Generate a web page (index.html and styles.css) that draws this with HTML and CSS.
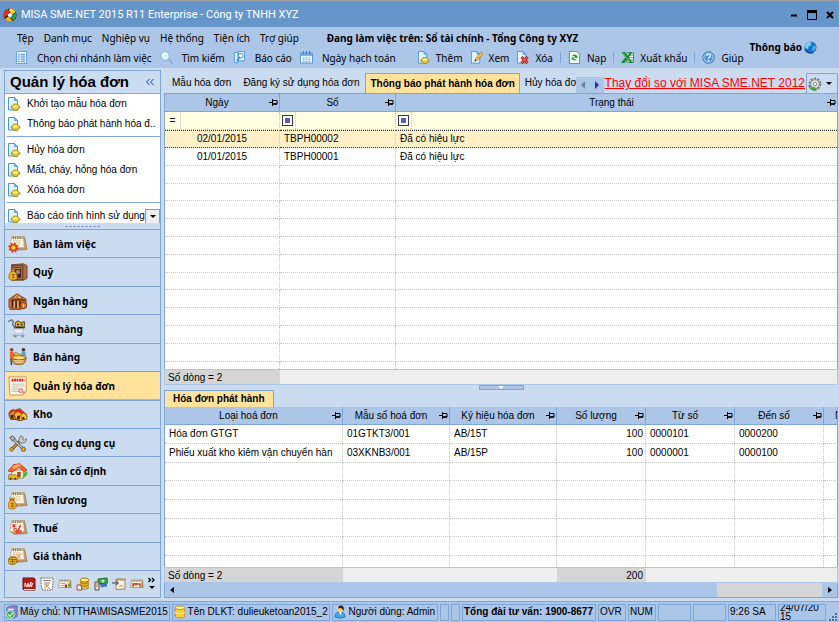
FILE: index.html
```html
<!DOCTYPE html>
<html lang="vi">
<head>
    <meta charset="UTF-8">
    <meta name="viewport" content="width=device-width, initial-scale=1.0">
    <title>MISA SME.NET 2015 R11 Enterprise - Công ty TNHH XYZ</title>
    <link rel="stylesheet" href="styles.css">
</head>
<body>
    <!-- Bộ biểu tượng dùng chung -->
    <svg class="defs" aria-hidden="true">
        <symbol id="i-pin" viewBox="0 0 9 7"><path d="M0 3.5h3M3.5 0v7" stroke="#000" fill="none"/><path d="M4 1.5h4v3.5h-4" stroke="#000" fill="none"/><path d="M4 5h4" stroke="#000" stroke-width="1.4"/></symbol>
        <symbol id="i-page" viewBox="0 0 14 14"><path d="M1.5.5h6l3 3v9.5h-9z" fill="#e4f3ff" stroke="#4795d6"/><path d="M7.5.5v3h3z" fill="#77b9ec" stroke="#4795d6" stroke-width=".7"/></symbol>
        <symbol id="i-add" viewBox="0 0 14 14"><use href="#i-page"/><path d="M4 9.500l2-1 .5-1.500h4l.5 1.500 2 1v1.500l-2 1-.5 1.500h-4l-.5-1.500-2-1z" fill="#d8c532" stroke="#95861a" stroke-width=".7"/><ellipse cx="8.500" cy="9.500" rx="2.600" ry="1.300" fill="#fff27c"/></symbol>
        <symbol id="i-edit" viewBox="0 0 14 14"><use href="#i-page"/><path d="M5 11l1-3 6-7 2 2-6 7z" fill="#f4bd45" stroke="#a66a1c" stroke-width=".7"/><path d="M5 11l.7-2 1.300 1.200z" fill="#333"/></symbol>
        <symbol id="i-del" viewBox="0 0 14 14"><use href="#i-page"/><path d="M6 6.500l6.500 6.500m0-6.500l-6.500 6.500" stroke="#a81d18" stroke-width="3.200"/><path d="M6.200 6.700l6 6m0-6l-6 6" stroke="#ef5a4a" stroke-width="1.500"/></symbol>
        <symbol id="i-form" viewBox="0 0 14 14"><path d="M1.500.5h11v13h-11z" fill="#f3faff" stroke="#4f9edc"/><path d="M3 3.500h2m1 0h5M3 5.500h2m1 0h5M3 7.500h2m1 0h5M3 9.500h2m1 0h5M3 11.500h2m1 0h5" stroke="#3987cb"/></symbol>
        <symbol id="i-find" viewBox="0 0 14 14"><path d="M9 9l4 4" stroke="#8eb6d9" stroke-width="2.400" stroke-linecap="round"/><circle cx="5.500" cy="5.500" r="4.700" fill="#d9f2ff" stroke="#84bce3" stroke-width="1.300"/><path d="M2.500 5a3 3 0 0 1 3-2.700" stroke="#fff" fill="none" stroke-width="1.400"/></symbol>
        <symbol id="i-report" viewBox="0 0 14 14"><path d="M1.500 1.500h4v11h-4zM5.500.5h7v10h-7z" fill="#e4f5ff" stroke="#4d9ad7"/><circle cx="8.500" cy="5" r="2.500" fill="#fff" stroke="#3d87c5"/><path d="M7 7l-3 4" stroke="#3d87c5" stroke-width="1.600"/></symbol>
        <symbol id="i-cal" viewBox="0 0 14 14"><path d="M.5 2.500h13v10.500h-13z" fill="#f5fbff" stroke="#468fcc"/><path d="M1 3h12v2.500h-12z" fill="#72b3e8"/><path d="M3.500 0v3.500M7 0v3.500M10.500 0v3.500" stroke="#347ab9" stroke-width="1.200"/><path d="M3 7.500h2m1 0h2m1 0h2M3 9.500h2m1 0h2m1 0h2M3 11.500h2m1 0h2m1 0h2" stroke="#5da0da"/></symbol>
        <symbol id="i-load" viewBox="0 0 14 14"><path d="M1.500.5h8l3 3v10h-11z" fill="#f2fbf2" stroke="#4b9b62"/><path d="M4 6q2.500-4 5-1l1-1v3.500h-3l1-1q-2-2-4-.5zM10 8q-2.500 4-5 1l-1 1v-3h3l-1 1q2 2 4 0z" fill="#16953a"/></symbol>
        <symbol id="i-xls" viewBox="0 0 14 14"><path d="M6 2h7.500v10h-7.500z" fill="#effaf0" stroke="#338a43"/><path d="M7 4.500h6M7 7h6M7 9.500h6" stroke="#55a563"/><path d="M.5 1h3.500l3 4 2.500-4h3l-4.200 6 4.700 6h-3.500l-3-3.800-3 3.800h-3.500l4.700-6z" fill="#1d8635"/><path d="M2 2l7.500 10" stroke="#84d28d" stroke-width=".8"/></symbol>
        <symbol id="i-help" viewBox="0 0 14 14"><circle cx="7" cy="7" r="6.200" fill="#4e98e0" stroke="#2a6bb8"/><circle cx="7" cy="7" r="5" fill="none" stroke="#c7e3fb"/><path d="M5 5.500q0-2 2-2t2 1.700q0 1-1 1.500t-1 1.600" stroke="#fff" stroke-width="1.300" fill="none"/><circle cx="7" cy="10.300" r=".9" fill="#fff"/></symbol>
        <symbol id="i-globe" viewBox="0 0 14 14"><circle cx="7" cy="7" r="6.500" fill="#1777cf"/><path d="M2 3q3-3 6-2l-1 2 1 1-3 2-1 3-3-2z" fill="#7bd0f7"/><path d="M9 6l3-1 1 2-2 3-2 0z" fill="#4fb0ea"/><path d="M1 9q3 5 9 3.500" stroke="#0b4a93" stroke-width="1.400" fill="none"/></symbol>
        <symbol id="i-gear" viewBox="0 0 16 16"><circle cx="8" cy="8" r="6.300" fill="none" stroke="#71776f" stroke-width="2" stroke-dasharray="2.400 1.550"/><circle cx="8" cy="8" r="5" fill="#e4e9e5" stroke="#757b74"/><circle cx="8" cy="8" r="2" fill="#fff" stroke="#757b74"/><path d="M1 9q1 4 5 4v-2l4 3-4 2v-1.500q-5 0-5-5.500z" fill="#42b52f" stroke="#26841b" stroke-width=".5"/></symbol>
        <symbol id="i-note" viewBox="0 0 22 20"><path d="M5 2l13 0 3 14-14 1-3-2z" fill="#c39a69" stroke="#8f6a42" stroke-width=".7"/><path d="M4 2h13l1 12h-16z" fill="#fbf3df" stroke="#b89665" stroke-width=".7"/><path d="M5 3.500h11" stroke="#5b4c3e" stroke-width="1.600" stroke-dasharray="1.500 1"/><path d="M5.500 6.500h9M5.300 8.500h9M5 10.500h9" stroke="#c9b99b" stroke-dasharray="2 1"/></symbol>
        <symbol id="n-desk" viewBox="0 0 22 20"><use href="#i-note"/><circle cx="6" cy="14" r="4" fill="none" stroke="#d92c13" stroke-width="3" stroke-dasharray="1.800 1.340"/><circle cx="6" cy="14" r="3" fill="#ffd63a" stroke="#e03a1a" stroke-width="1.500"/></symbol>
        <symbol id="i-bag" viewBox="0 0 22 20"><path d="M4 9l-1-2h5l-1 2q4 4 3 8-1 2-4.500 2t-4.500-2q-1-4 3-8z" fill="#f1b32c" stroke="#915911" stroke-width=".8"/><path d="M3 9h5" stroke="#b33a13"/><path d="M4 13h3.500M4 16h3.500M5.700 12v5" stroke="#8e5211" stroke-width=".9"/></symbol>
        <symbol id="n-safe" viewBox="0 0 22 20"><path d="M4 2l13-1 4 2v14l-4 2h-13z" fill="#ad6e49" stroke="#573018" stroke-width=".8"/><path d="M4 2h13v17h-13z" fill="#744026"/><path d="M6 4h9v13h-9z" fill="#3c2217" stroke="#bd8155"/><circle cx="11" cy="10" r="2.500" fill="#a6815f"/><path d="M7 6h7" stroke="#d8b47c"/><use href="#i-bag"/></symbol>
        <symbol id="n-bank" viewBox="0 0 22 20"><path d="M1 8l9-6 10 6v9l-8 2-11-2z" fill="#c4773f" stroke="#6f3414" stroke-width=".8"/><path d="M5 7l5-4 6 4z" fill="#ffe07a" stroke="#6f3414" stroke-width=".6"/><circle cx="10" cy="6" r="1.500" fill="#d06a20"/><path d="M3 9.500l8-1 8 1" stroke="#5c2910" stroke-width="1.500" fill="none"/><path d="M5 10v7M9 10v8M13 10v7" stroke="#5c2910" stroke-width="2.200"/><path d="M7 10v8M11 10v8" stroke="#f4c48d" stroke-width="1.200"/><path d="M1 17l13 1 1 2h-13z" fill="#a85527"/><circle cx="17" cy="15" r="3.500" fill="#e07c2c" stroke="#6b2e0e"/><path d="M17 13v4" stroke="#ffe07a"/></symbol>
        <symbol id="n-buy" viewBox="0 0 22 20"><path d="M0 2l4-2 2 2-1 3 4 6" fill="none" stroke="#5b7794" stroke-width="1.500"/><path d="M8 3l3-2 3 2 4-1v7h-10z" fill="#ecb021" stroke="#493817"/><path d="M10 5h2m2 0h2M9 8h8" stroke="#292019" stroke-width="1.600"/><path d="M6 10h11l-1 5h-8z" fill="#e8f0f7" stroke="#b0bfce"/><path d="M5 17h12M8 15l-3 3M15 15l3 2" stroke="#9aabbb"/><circle cx="8" cy="18" r="1.500" fill="#8494a5"/><circle cx="16" cy="18" r="1.500" fill="#8494a5"/></symbol>
        <symbol id="n-sell" viewBox="0 0 22 20"><circle cx="4" cy="2" r="2" fill="#8b4b2a"/><path d="M2 4h4l2 8h-6z" fill="#ef6529"/><circle cx="17" cy="2" r="2" fill="#3d3430"/><path d="M15 4h4l1 8h-6z" fill="#5d9fc4"/><path d="M6 10l2-5 5 2 4 3z" fill="#f4d02a" stroke="#a56f14"/><ellipse cx="12" cy="11" rx="8" ry="2.500" fill="#f8d777" stroke="#9b631c"/><path d="M4 11q1 7 5 7h6q4 0 5-7-8 5-16 0z" fill="#d9a04b" stroke="#80501a"/><path d="M7 14h10M8 16h8" stroke="#f9d995"/><path d="M3 12l1 7" stroke="#3e4456" stroke-width="1.600"/></symbol>
        <symbol id="n-inv" viewBox="0 0 22 22"><path d="M1 1h19v16l-4 4h-14z" fill="#fff7e8" stroke="#c28d50"/><path d="M4 4.500h14" stroke="#ee1515" stroke-width="3" stroke-dasharray="2 .7"/><path d="M4 9h14M4 11h14M4 13h8M4 15h8M4 17h8" stroke="#b9b2aa" stroke-width=".8"/><circle cx="14" cy="16" r="2.300" fill="#f7bbb6" stroke="#d56c67"/><path d="M16 21l0-4h4z" fill="#c9904f"/></symbol>
        <symbol id="n-store" viewBox="0 0 22 20"><path d="M7 6l6-2 8 7-2 2z" fill="#e9321f" stroke="#8e150f" stroke-width=".6"/><path d="M1 11q0-5 4-5t5 5v5l-7 0z" fill="#d18931" stroke="#6f360f"/><path d="M7 12q0-5 4-5t5 5v5h-6z" fill="#f3bc34" stroke="#783d10"/><path d="M14 13q0-4 3-4t4 4l-1 3h-4z" fill="#f6cf42" stroke="#83470c"/><path d="M3 15v-4h3v4zM10 16v-4h3v4zM16 16v-3h2v3z" fill="#4a1a0c"/><path d="M2 9q2-4 5-3M8 9q3-4 6 0" stroke="#d12817" stroke-width="1.800" fill="none"/></symbol>
        <symbol id="n-tools" viewBox="0 0 22 20"><path d="M4 17l11-11" stroke="#6b431b" stroke-width="3.200"/><path d="M4 17l11-11" stroke="#dc9a3a" stroke-width="1.600"/><path d="M5 5l12 12" stroke="#50545a" stroke-width="3"/><path d="M5 5l12 12" stroke="#ccd3da" stroke-width="1.400"/><path d="M14 2l3 2-1 2 2 1 2-2q1 5-4 5t-4-4z" fill="#c8ced5" stroke="#575b61" stroke-width=".8"/><path d="M2 4l3-2 3 3-3 3z" fill="#a8b0b8" stroke="#4d5155"/><circle cx="17" cy="17" r="2.300" fill="#f2ae2f" stroke="#7d4b0e"/><circle cx="4" cy="17" r="2" fill="#eeb33f" stroke="#7d4b0e"/></symbol>
        <symbol id="n-house" viewBox="0 0 22 20"><path d="M4 9h13v9h-13z" fill="#fff3d2" stroke="#9c6623" stroke-width=".7"/><path d="M0 10l6-7 7-1 8 7-3 2-6-5-7 5z" fill="#f0682a" stroke="#b92610" stroke-width=".8"/><path d="M4 5l8-3 3 2-8 4z" fill="#fba45c"/><path d="M10 11h4v6h-4z" fill="#a94d1d"/><path d="M17 12q4-2 5 0l-3 5h-3z" fill="#54b83b"/><path d="M1 14h7l3 2v3h-11z" fill="#efb61d" stroke="#825710" stroke-width=".7"/><circle cx="3" cy="18.500" r="1.200" fill="#333"/><circle cx="8" cy="18.500" r="1.200" fill="#333"/></symbol>
        <symbol id="n-wage" viewBox="0 0 22 20"><use href="#i-note"/><use href="#i-bag" x="-1" y="1"/></symbol>
        <symbol id="n-tax" viewBox="0 0 22 20"><use href="#i-note"/><path d="M5 6l3 3M8 6l-3 3M14 7l-5 9" stroke="#e21b1b" stroke-width="1.400"/><circle cx="8" cy="12" r="1.500" fill="none" stroke="#e21b1b"/><circle cx="13" cy="14" r="1.500" fill="none" stroke="#e21b1b"/></symbol>
        <symbol id="n-cost" viewBox="0 0 22 20"><use href="#i-note"/><path d="M9 8l3 2 3-3M9 12h5" stroke="#e9865c" fill="none"/><path d="M0 14l3-3h5l2 3v3l-3 2h-5l-2-2z" fill="#eebc1e" stroke="#77500b"/><path d="M1 14h8M5 12v6M2 16h6" stroke="#77500b" stroke-width=".8"/></symbol>
        <symbol id="s-book" viewBox="0 0 14 14"><path d="M1 1l11 0 1 1v11l-11 0-1-1z" fill="#b3201c" stroke="#6e0f10"/><path d="M3 10v-4l2 4 1-4 1 4 2-5v5l2-4" stroke="#ffe9d8" fill="none"/><path d="M2 12.500h11" stroke="#f4d8c0"/></symbol>
        <symbol id="s-cert" viewBox="0 0 14 14"><path d="M1 1h12v5l-1 7h-10l-1-7z" fill="#fff9ec" stroke="#645c50" stroke-dasharray="1.500 1"/><path d="M3 3.500h8M4 6h6M4 8h5" stroke="#8d8375"/><path d="M4 11l3-2 3 3" stroke="#d48b3a" fill="none"/></symbol>
        <symbol id="s-note" viewBox="0 0 14 14"><path d="M2 3h11l.5 8h-10z" fill="#b88850"/><path d="M1.500 3h10.500l-.5 7.500h-11z" fill="#fcf4e2" stroke="#a98657" stroke-width=".7"/><path d="M2.500 4h8.500" stroke="#5c4a37" stroke-dasharray="1 .6"/><path d="M2.500 6.500h5M2.500 8.500h5" stroke="#aaa"/></symbol>
        <symbol id="s-chart" viewBox="0 0 14 14"><use href="#s-note"/><path d="M7 9h2" stroke="#e12" stroke-width="3"/><path d="M10 8h2" stroke="#3b3" stroke-width="3"/></symbol>
        <symbol id="s-coins" viewBox="0 0 14 14"><path d="M4 3v8h9v-8z" fill="#e9b32c"/><ellipse cx="8.500" cy="3" rx="4.500" ry="2" fill="#ffe37a" stroke="#a8740f"/><path d="M4 5.500q4.500 3 9 0M4 8q4.500 3 9 0M4 11q4.500 3 9 0" stroke="#a8740f" fill="none"/><path d="M1 8h4l1 5h-5z" fill="#f6efe4" stroke="#b1442a"/></symbol>
        <symbol id="s-cash" viewBox="0 0 14 14"><path d="M4 2l9-1 .5 5-9 1z" fill="#3aa845" stroke="#1a6e28"/><circle cx="9" cy="4" r="1.500" fill="#d5f2cf"/><path d="M6 7l7-.5v3l-6 1z" fill="#476fca"/><path d="M1 5h4v8h-4z" fill="#e9e2d0" stroke="#54493d"/><path d="M2 7h2M2 9h2" stroke="#cc6c2c"/></symbol>
        <symbol id="s-in" viewBox="0 0 14 14"><path d="M4 2h9v10l-9 .5z" fill="#fbf1dc" stroke="#a98150"/><path d="M5 3h8" stroke="#5c4a37" stroke-dasharray="1 .6"/><path d="M0 6h6M4 4l2.500 2-2.500 2" stroke="#444" fill="none"/><path d="M7 9h4" stroke="#999"/></symbol>
        <symbol id="s-bal" viewBox="0 0 14 14"><use href="#s-note"/><path d="M3 10v-3h7v3" stroke="#a04f20" fill="none" stroke-width="1.300"/></symbol>
        <symbol id="t-server" viewBox="0 0 14 16"><path d="M1 3l4-2h8v12l-3 2h-9z" fill="#8b83cc" stroke="#5a559c" stroke-width=".8"/><path d="M2 4h7v2h-7z" fill="#e6e4fa"/><circle cx="5" cy="11" r="4.500" fill="#28b43e" stroke="#e1f7e3"/><path d="M2.800 11l2 2 3-4" stroke="#fff" stroke-width="1.500" fill="none"/></symbol>
        <symbol id="t-db" viewBox="0 0 14 16"><path d="M1.500 3v10q0 2 5.500 2t5.500-2v-10z" fill="#f5ce3c" stroke="#c08a13"/><ellipse cx="7" cy="3" rx="5.500" ry="2" fill="#fff4b0" stroke="#c08a13"/><path d="M1.500 8q0 1.800 5.500 1.800t5.500-1.800" fill="none" stroke="#fff2a8" stroke-width="1.300"/></symbol>
        <symbol id="t-user" viewBox="0 0 14 16"><path d="M1 14q0-5 4-6h4q4 1 4 6-6 2.500-12 0z" fill="#45a7e6" stroke="#2178bb"/><path d="M6 8h3l-1.500 4z" fill="#fff"/><circle cx="7.500" cy="5" r="3.300" fill="#fbd06b"/><path d="M5 4q0-3.500 3-3.500 3.500 0 3.500 4.500l-1 2q0-3-2-3.500t-3.500.5z" fill="#2a2018"/></symbol>
    </svg>

    <!-- Thanh tiêu đề -->
    <header class="titlebar">
        <svg class="logo" viewBox="0 0 16 16"><circle cx="8" cy="8" r="7.500" fill="#1c1c1c"/><path d="M8 .5a7.500 7.500 0 0 1 6.500 4l-4 3-4-5z" fill="#f5d51f"/><path d="M14.500 5a7.500 7.500 0 0 1-3 9.500l-3-4z" fill="#2aa04a"/><path d="M11 15a7.500 7.500 0 0 1-9-2.500l4.500-3z" fill="#f2b21c"/><path d="M1.500 12a7.500 7.500 0 0 1 4-11l2 4-4 4z" fill="#e53223"/><path d="M8 5l3 3-3 3-3-3z" fill="#fff"/></svg>
        <h1>MISA SME.NET 2015 R11 Enterprise - Công ty TNHH XYZ</h1>
        <div class="win-buttons">
            <button type="button" aria-label="Thu nhỏ"><svg viewBox="0 0 10 10"><path d="M2 5.500h6" stroke="#000" stroke-width="2"/></svg></button>
            <button type="button" aria-label="Phóng to"><svg viewBox="0 0 10 10"><path d="M.5 1v8.500h9v-8.500" fill="none" stroke="#000"/><path d="M0 1.500h10" stroke="#000" stroke-width="3"/></svg></button>
            <button type="button" aria-label="Đóng"><svg viewBox="0 0 10 10"><path d="M2 2l6 6M8 2l-6 6" stroke="#000" stroke-width="2"/></svg></button>
        </div>
    </header>

    <!-- Menu và thanh công cụ -->
    <div class="bars">
        <div class="bar-rows">
            <nav class="menubar">
                <span class="grip"></span>
                <button type="button">Tệp</button>
                <button type="button">Danh mục</button>
                <button type="button">Nghiệp vụ</button>
                <button type="button">Hệ thống</button>
                <button type="button">Tiện ích</button>
                <button type="button">Trợ giúp</button>
                <strong>Đang làm việc trên: Sổ tài chính - Tổng Công ty XYZ</strong>
            </nav>
            <div class="toolbars">
                <div class="toolbar">
                    <span class="grip"></span>
                    <button type="button"><svg><use href="#i-form"/></svg>Chọn chi nhánh làm việc</button>
                    <button type="button"><svg><use href="#i-find"/></svg>Tìm kiếm</button>
                    <button type="button"><svg><use href="#i-report"/></svg>Báo cáo</button>
                    <button type="button"><svg><use href="#i-cal"/></svg>Ngày hạch toán</button>
                </div>
                <div class="toolbar compact">
                    <span class="grip"></span>
                    <button type="button"><svg><use href="#i-add"/></svg>Thêm</button>
                    <button type="button"><svg><use href="#i-edit"/></svg>Xem</button>
                    <button type="button"><svg><use href="#i-del"/></svg>Xóa</button>
                    <span class="sep"></span>
                    <button type="button"><svg><use href="#i-load"/></svg>Nạp</button>
                    <span class="sep"></span>
                    <button type="button"><svg><use href="#i-xls"/></svg>Xuất khẩu</button>
                    <span class="sep"></span>
                    <button type="button"><svg><use href="#i-help"/></svg>Giúp</button>
                </div>
            </div>
        </div>
        <button type="button" class="notice">Thông báo<svg><use href="#i-globe"/></svg></button>
    </div>

    <div class="workspace">
        <!-- Cột trái -->
        <aside class="sidebar">
            <div class="side-head"><h2>Quản lý hóa đơn</h2><button type="button" aria-label="Thu gọn"><svg viewBox="0 0 8 8"><path d="M3.500 1l-3 3 3 3M7.500 1l-3 3 3 3" fill="none" stroke="#1b3f86"/></svg></button></div>
            <div class="tasks">
                <a href="#"><svg><use href="#i-add"/></svg><span>Khởi tạo mẫu hóa đơn</span></a>
                <a href="#"><svg><use href="#i-add"/></svg><span>Thông báo phát hành hóa đ..</span></a>
                <hr>
                <a href="#"><svg><use href="#i-add"/></svg><span>Hủy hóa đơn</span></a>
                <a href="#"><svg><use href="#i-add"/></svg><span>Mất, cháy, hỏng hóa đơn</span></a>
                <a href="#"><svg><use href="#i-add"/></svg><span>Xóa hóa đơn</span></a>
                <hr>
                <div class="task-more">
                    <a href="#"><svg><use href="#i-add"/></svg><span>Báo cáo tình hình sử dụng</span></a>
                    <button type="button" aria-label="Xem thêm"><i class="tri down"></i></button>
                </div>
            </div>
            <div class="side-split"></div>
            <nav class="modules">
                <a href="#"><svg><use href="#n-desk"/></svg>Bàn làm việc</a>
                <a href="#"><svg><use href="#n-safe"/></svg>Quỹ</a>
                <a href="#"><svg><use href="#n-bank"/></svg>Ngân hàng</a>
                <a href="#"><svg><use href="#n-buy"/></svg>Mua hàng</a>
                <a href="#"><svg><use href="#n-sell"/></svg>Bán hàng</a>
                <a href="#" class="active"><svg><use href="#n-inv"/></svg>Quản lý hóa đơn</a>
                <a href="#"><svg><use href="#n-store"/></svg>Kho</a>
                <a href="#"><svg><use href="#n-tools"/></svg>Công cụ dụng cụ</a>
                <a href="#"><svg><use href="#n-house"/></svg>Tài sản cố định</a>
                <a href="#"><svg><use href="#n-wage"/></svg>Tiền lương</a>
                <a href="#"><svg><use href="#n-tax"/></svg>Thuế</a>
                <a href="#"><svg><use href="#n-cost"/></svg>Giá thành</a>
            </nav>
            <div class="shortcuts">
                <button type="button" aria-label="Sổ cái"><svg><use href="#s-book"/></svg></button>
                <button type="button" aria-label="Hợp đồng"><svg><use href="#s-cert"/></svg></button>
                <button type="button" aria-label="Tổng hợp"><svg><use href="#s-chart"/></svg></button>
                <button type="button" aria-label="Ngân sách"><svg><use href="#s-coins"/></svg></button>
                <button type="button" aria-label="Tiền mặt"><svg><use href="#s-cash"/></svg></button>
                <button type="button" aria-label="Nhập số dư"><svg><use href="#s-in"/></svg></button>
                <button type="button" aria-label="Cân đối"><svg><use href="#s-bal"/></svg></button>
                <button type="button" aria-label="Cấu hình"><svg viewBox="0 0 8 14"><path d="M.5 1l2 2-2 2M4 1l2 2-2 2" fill="none" stroke="#000" stroke-width="1.300"/><path d="M1 9h6l-3 3z"/></svg></button>
            </div>
        </aside>

        <!-- Vùng nội dung -->
        <main class="content">
            <div class="tabs">
                <button type="button">Mẫu hóa đơn</button>
                <button type="button">Đăng ký sử dụng hóa đơn</button>
                <button type="button" class="active">Thông báo phát hành hóa đơn</button>
                <button type="button" class="cut">Hủy hóa đơn</button>
                <div class="tab-arrows">
                    <button type="button" aria-label="Trước"><i class="tri left"></i></button>
                    <button type="button" aria-label="Sau"><i class="tri right"></i></button>
                </div>
                <a href="#" class="whatsnew">Thay đổi so với MISA SME.NET 2012</a>
                <button type="button" class="options" aria-label="Tùy chọn"><svg><use href="#i-gear"/></svg><i class="tri down"></i></button>
            </div>

            <div class="grid-box notices">
                <table>
                    <colgroup><col class="c-date"><col class="c-no"><col></colgroup>
                    <thead>
                        <tr>
                            <th><div>Ngày<svg><use href="#i-pin"/></svg></div></th>
                            <th><div>Số<svg><use href="#i-pin"/></svg></div></th>
                            <th><div>Trạng thái<svg><use href="#i-pin"/></svg></div></th>
                        </tr>
                    </thead>
                    <tbody>
                        <tr class="filter">
                            <td><div><span>=</span><input type="text" aria-label="Lọc ngày"></div></td>
                            <td><div><span><i class="cond"></i></span><input type="text" aria-label="Lọc số"></div></td>
                            <td><div><span><i class="cond"></i></span><input type="text" aria-label="Lọc trạng thái"></div></td>
                        </tr>
                        <tr class="selected"><td class="center">02/01/2015</td><td>TBPH00002</td><td>Đã có hiệu lực</td></tr>
                        <tr><td class="center">01/01/2015</td><td>TBPH00001</td><td>Đã có hiệu lực</td></tr>
                        <tr><td></td><td></td><td></td></tr>
                        <tr><td></td><td></td><td></td></tr>
                        <tr><td></td><td></td><td></td></tr>
                        <tr><td></td><td></td><td></td></tr>
                        <tr><td></td><td></td><td></td></tr>
                        <tr><td></td><td></td><td></td></tr>
                        <tr><td></td><td></td><td></td></tr>
                        <tr><td></td><td></td><td></td></tr>
                        <tr><td></td><td></td><td></td></tr>
                        <tr><td></td><td></td><td></td></tr>
                        <tr><td></td><td></td><td></td></tr>
                        <tr><td></td><td></td><td></td></tr>
                    </tbody>
                </table>
            </div>
            <table class="total">
                <colgroup><col class="c-date"><col></colgroup>
                <tr><td class="dark">Số dòng = 2</td><td></td></tr>
            </table>

            <div class="splitter"><span><i class="tri down"></i></span></div>

            <div class="subtabs"><button type="button" class="active">Hóa đơn phát hành</button></div>
            <div class="grid-box invoices">
                <table>
                    <colgroup><col class="c-type"><col class="c-form"><col class="c-form"><col class="c-qty"><col class="c-qty"><col class="c-qty"><col class="c-last"></colgroup>
                    <thead>
                        <tr>
                            <th><div>Loại hoá đơn<svg><use href="#i-pin"/></svg></div></th>
                            <th><div>Mẫu số hoá đơn<svg><use href="#i-pin"/></svg></div></th>
                            <th><div>Ký hiệu hóa đơn<svg><use href="#i-pin"/></svg></div></th>
                            <th><div>Số lượng<svg><use href="#i-pin"/></svg></div></th>
                            <th><div>Từ số<svg><use href="#i-pin"/></svg></div></th>
                            <th><div>Đến số<svg><use href="#i-pin"/></svg></div></th>
                            <th><div>N</div></th>
                        </tr>
                    </thead>
                    <tbody>
                        <tr><td>Hóa đơn GTGT</td><td>01GTKT3/001</td><td>AB/15T</td><td class="num">100</td><td>0000101</td><td>0000200</td><td></td></tr>
                        <tr><td>Phiếu xuất kho kiêm vận chuyển hàn</td><td>03XKNB3/001</td><td>AB/15P</td><td class="num">100</td><td>0000001</td><td>0000100</td><td></td></tr>
                        <tr><td></td><td></td><td></td><td></td><td></td><td></td><td></td></tr>
                        <tr><td></td><td></td><td></td><td></td><td></td><td></td><td></td></tr>
                        <tr><td></td><td></td><td></td><td></td><td></td><td></td><td></td></tr>
                        <tr><td></td><td></td><td></td><td></td><td></td><td></td><td></td></tr>
                        <tr><td></td><td></td><td></td><td></td><td></td><td></td><td></td></tr>
                        <tr><td></td><td></td><td></td><td></td><td></td><td></td><td></td></tr>
                    </tbody>
                </table>
            </div>
            <table class="total">
                <colgroup><col class="c-type"><col class="c-form"><col class="c-form"><col class="c-qty"><col></colgroup>
                <tr><td class="dark">Số dòng = 2</td><td colspan="2"></td><td class="dark num">200</td><td></td></tr>
            </table>
            <div class="hscroll">
                <button type="button" aria-label="Cuộn trái"><i class="tri left"></i></button>
                <span class="thumb"></span>
                <button type="button" aria-label="Cuộn phải"><i class="tri right"></i></button>
            </div>
        </main>
    </div>

    <!-- Thanh trạng thái -->
    <footer class="statusbar">
        <span class="server"><svg><use href="#t-server"/></svg>Máy chủ: NTTHA\MISASME2015</span>
        <span class="db"><svg><use href="#t-db"/></svg>Tên DLKT: dulieuketoan2015_2</span>
        <span class="user"><svg><use href="#t-user"/></svg>Người dùng: Admin</span>
        <span class="tiny"></span>
        <span class="tiny"></span>
        <span class="hotline">Tổng đài tư vấn: 1900-8677</span>
        <span class="key">OVR</span>
        <span class="key">NUM</span>
        <span class="blank"></span>
        <span class="blank"></span>
        <span class="clock">9:26 SA</span>
        <span class="clock date">24/07/20 15</span>
        <svg class="resize" viewBox="0 0 10 10"><path d="M7 1h2v2h-2zM4 4h2v2h-2zM7 4h2v2h-2zM1 7h2v2h-2zM4 7h2v2h-2zM7 7h2v2h-2z" fill="#4b6fa3"/></svg>
    </footer>
</body>
</html>
```

FILE: styles.css
```css
* {
    box-sizing: border-box;
}

body {
    margin: 0;
    height: 100vh;
    display: flex;
    flex-direction: column;
    overflow: hidden;
    background-color: #cbdcf1;
    color: #000;
    font: 10px/14px "Liberation Sans", Arial, sans-serif;
    white-space: nowrap;
}

button {
    margin: 0;
    padding: 0;
    border: 0;
    background: none;
    color: inherit;
    font: inherit;
    white-space: nowrap;
}

a {
    color: inherit;
    text-decoration: none;
}

svg {
    flex: none;
}

.defs {
    position: absolute;
    width: 0;
    height: 0;
}

/* Mũi tên nhỏ */
.tri {
    display: block;
    width: 0;
    height: 0;
    border: 3px solid transparent;
}

.tri.down {
    border-top-color: #000;
    border-bottom-width: 0;
}

.tri.left {
    border-width: 4px;
    border-left-width: 0;
    border-right-color: #000;
}

.tri.right {
    border-width: 4px;
    border-right-width: 0;
    border-left-color: #000;
}

/* Thanh tiêu đề */
.titlebar {
    display: flex;
    align-items: center;
    gap: 4px;
    height: 27px;
    padding: 2px 4px 0 3px;
    border-top: 1px solid #9e9e9e;
    background-color: #6696c9;
    color: #fff;
}

.titlebar h1 {
    flex: 1;
    margin: 0;
    font: 11px/16px Roboto, sans-serif;
}

.logo {
    width: 14px;
    height: 14px;
}

.win-buttons {
    display: flex;
    gap: 8px;
}

.win-buttons svg {
    display: block;
    width: 10px;
    height: 10px;
}

/* Menu và thanh công cụ */
.bars {
    display: flex;
    align-items: center;
    justify-content: space-between;
    height: 41px;
    padding: 0 22px 0 3px;
    background-color: #acc6e8;
    font: 10px/14px "Noto Sans", sans-serif;
}

.menubar,
.toolbars,
.toolbar {
    display: flex;
    align-items: center;
}

.menubar {
    gap: 10px;
    height: 20px;
}

.menubar strong {
    margin-left: 18px;
}

.toolbars {
    gap: 10px;
    height: 19px;
}

.toolbar {
    gap: 8px;
}

.toolbar button,
.notice {
    display: flex;
    align-items: center;
    gap: 9px;
}

.toolbar.compact {
    gap: 7px;
}

.toolbar.compact button {
    gap: 6px;
}

.toolbar svg,
.notice svg {
    width: 13px;
    height: 13px;
}

.notice {
    gap: 2px;
    padding-bottom: 1px;
    font-weight: bold;
}

.grip {
    width: 4px;
    height: 16px;
    background-image: radial-gradient(#8ba6cb 40%, transparent 45%);
    background-size: 2px 2px;
}

.sep {
    width: 1px;
    height: 11px;
    background-color: #7fa3d3;
}

/* Khung chính */
.workspace {
    flex: 1;
    display: flex;
    gap: 3px;
    min-height: 0;
    padding: 2px 1px 3px 4px;
}

.sidebar {
    display: flex;
    flex-direction: column;
    flex: none;
    width: 157px;
    border: 1px solid #7fa6d9;
}

.side-head {
    display: flex;
    align-items: center;
    justify-content: space-between;
    height: 23px;
    padding: 0 6px 0 5px;
    border-bottom: 1px solid #7fa6d9;
}

.side-head h2 {
    margin: 0;
    font-size: 15px;
    line-height: 20px;
}

.side-head svg {
    display: block;
    width: 8px;
    height: 8px;
}

.tasks {
    height: 129px;
    overflow: hidden;
    background-color: #fff;
}

.tasks a {
    display: flex;
    align-items: center;
    gap: 6px;
    height: 20px;
    padding-left: 2px;
}

.tasks svg {
    width: 14px;
    height: 14px;
}

.tasks hr {
    margin: 2px 0 3px 2px;
    border: 0;
    border-top: 1px solid #7fa6d9;
}

.task-more {
    display: flex;
    justify-content: space-between;
    align-items: center;
}

.task-more button {
    display: flex;
    align-items: center;
    justify-content: center;
    width: 15px;
    height: 15px;
    border: 1px solid #9a9a9a;
    background-color: #eee;
}

.side-split {
    height: 6px;
    background: radial-gradient(#5f86c0 40%, transparent 45%) center / 4px 3px repeat-x content-box;
    padding: 0 60px;
}

.modules {
    flex: 1;
    display: flex;
    flex-direction: column;
    min-height: 0;
    font: bold 10px/14px "Noto Sans", sans-serif;
}

.modules a {
    flex: 1;
    display: flex;
    align-items: center;
    gap: 5px;
    min-height: 0;
    padding-left: 3px;
    border-top: 1px solid #7fa6d9;
}

.modules a.active {
    background-color: #ffe29c;
    box-shadow: inset 0 -1px #f2a868;
}

.modules svg {
    width: 20px;
    height: 20px;
}

.shortcuts {
    display: flex;
    align-items: center;
    justify-content: flex-end;
    gap: 4px;
    height: 27px;
    padding-right: 4px;
    border-top: 1px solid #7fa6d9;
}

.shortcuts svg {
    display: block;
    width: 14px;
    height: 14px;
}

.shortcuts button:last-child svg {
    width: 8px;
}

/* Các thẻ */
.content {
    flex: 1;
    display: flex;
    flex-direction: column;
    min-width: 0;
}

.tabs,
.subtabs {
    display: flex;
    align-items: flex-end;
    flex: none;
}

.tabs {
    height: 24px;
    padding-left: 2px;
    border-bottom: 1px solid #7fa6d9;
}

.tabs > button {
    flex: none;
    height: 20px;
    padding: 0 6px;
}

.tabs > button.cut {
    flex: 1;
    min-width: 0;
    padding: 0 0 0 5px;
    overflow: hidden;
    text-align: left;
}

.tabs > button.active,
.subtabs button.active {
    padding: 0 4px;
    border: 1px solid #7fa6d9;
    border-bottom: 0;
    background-color: #ffe29c;
    font-weight: bold;
}

.tab-arrows {
    display: flex;
    align-items: center;
    justify-content: space-around;
    flex: none;
    width: 28px;
    height: 16px;
    background-color: #acc6e8;
}

.tab-arrows .left {
    border-right-color: #6c7f9c;
}

.tab-arrows .right {
    border-left-color: #123c91;
}

.whatsnew {
    flex: none;
    padding: 0 1px;
    color: #f00;
    font-size: 12px;
    line-height: 20px;
    text-decoration: underline;
}

.tabs > .options {
    display: flex;
    align-items: center;
    justify-content: space-between;
    width: 32px;
    padding: 0 5px 0 1px;
    border: 1px solid #7fa6d9;
    border-bottom: 0;
}

.options svg {
    width: 14px;
    height: 14px;
}

.subtabs {
    height: 17px;
}

.subtabs button.active {
    height: 17px;
    padding: 0 8px;
}

/* Bảng dữ liệu */
.grid-box {
    flex: 1;
    overflow: hidden;
    background-color: #fff;
    border: solid #7fa6d9;
    border-width: 0 1px;
}

.grid-box.notices {
    flex: none;
    height: 275px;
}

table {
    width: 100%;
    table-layout: fixed;
    border-collapse: separate;
    border-spacing: 0;
}

.c-date { width: 115px; }
.c-no { width: 116px; }
.c-type { width: 178px; }
.c-form { width: 107px; }
.c-qty { width: 89px; }
.c-last { width: 36px; }

th {
    height: 18px;
    padding: 0 1px 0 0;
    border-right: 1px solid #7fa6d9;
    border-bottom: 1px solid #7fa6d9;
    background-color: #acc6e8;
    font-weight: normal;
}

th div {
    display: flex;
    align-items: center;
    justify-content: center;
}

th svg {
    width: 9px;
    height: 7px;
    margin-left: auto;
}

/* Giữ chữ nằm giữa phần trống bên trái ghim */
th div:has(svg)::before {
    content: "";
    margin-right: auto;
}

td {
    height: 18px;
    padding: 0 4px;
    border-right: 1px dotted #c6c6c6;
    border-bottom: 1px dotted #c6c6c6;
    overflow: hidden;
}

.center {
    text-align: center;
}

.num {
    text-align: right;
    padding-right: 2px;
}

.notices tr:nth-child(5n) td {
    height: 17px;
}

.notices th:last-child,
.notices td:last-child {
    border-right: 0;
}

.invoices table {
    width: 695px;
}

.invoices td {
    height: 19px;
}

.invoices tr:nth-child(3n) td {
    height: 18px;
}

.invoices th:last-child div {
    justify-content: flex-start;
    padding-left: 11px;
}

.filter td {
    padding: 0;
    background-color: #ffffe1;
}

.filter div {
    display: flex;
    height: 17px;
}

.filter span {
    display: flex;
    align-items: center;
    justify-content: center;
    width: 16px;
    border-right: 1px dotted #c6c6c6;
}

.filter input {
    flex: 1;
    min-width: 0;
    border: 0;
    background: none;
    font: inherit;
}

.cond {
    width: 11px;
    height: 11px;
    border: 1px solid #33336b;
    background-color: #5c5cc4;
    box-shadow: inset 0 0 0 2px #fff;
}

.selected td {
    border-top: 1px dotted #333;
    border-bottom: 1px dotted #333;
    background-color: #fff0c8;
}

.total {
    flex: none;
    background-color: #eee;
    border: 1px solid #acc6e8;
}

.total td {
    height: 14px;
    padding: 0 3px;
    border: 0;
    line-height: 13px;
}

.total .dark {
    background-color: #d5d5d5;
}

.splitter {
    display: flex;
    justify-content: center;
    flex: none;
    height: 5px;
}

.splitter span {
    display: flex;
    justify-content: center;
    width: 45px;
    height: 5px;
    border: 1px solid #7fa6d9;
    background-color: #acc6e8;
}

.splitter .tri {
    border-top-color: #fff;
}

.hscroll {
    display: flex;
    align-items: center;
    justify-content: space-between;
    flex: none;
    height: 15px;
    padding: 0 5px;
    background-color: #acc6e8;
    border: 1px solid #7fa6d9;
    border-top: 0;
}

.hscroll .thumb {
    width: 105px;
    height: 14px;
    margin: 0 6px 0 auto;
    background-color: #d5d5d5;
}

.hscroll .tri {
    border-top-width: 3px;
    border-bottom-width: 3px;
}

/* Thanh trạng thái */
.statusbar {
    display: flex;
    align-items: center;
    gap: 2px;
    flex: none;
    height: 21px;
    padding: 0 1px 0 4px;
    background-color: #acc6e8;
    border-top: 1px solid #7fa6d9;
}

.statusbar span {
    display: flex;
    align-items: center;
    flex: none;
    gap: 2px;
    height: 17px;
    padding: 0 1px;
    overflow: hidden;
    border: 1px solid #7fa6d9;
}

.statusbar span svg {
    width: 12px;
    height: 14px;
}

.statusbar .server { flex: 167 0 0; }
.statusbar .db { flex: 160 0 0; }
.statusbar .user { flex: 105 0 0; }
.statusbar .tiny { width: 9px; }
.statusbar .hotline { width: 134px; font-weight: bold; }
.statusbar .key { width: 28px; }
.statusbar .blank { width: 33px; }
.statusbar .clock { width: 48px; }

.statusbar .date {
    white-space: normal;
    line-height: 9px;
}

.resize {
    width: 10px;
    height: 10px;
    align-self: flex-end;
}
```
